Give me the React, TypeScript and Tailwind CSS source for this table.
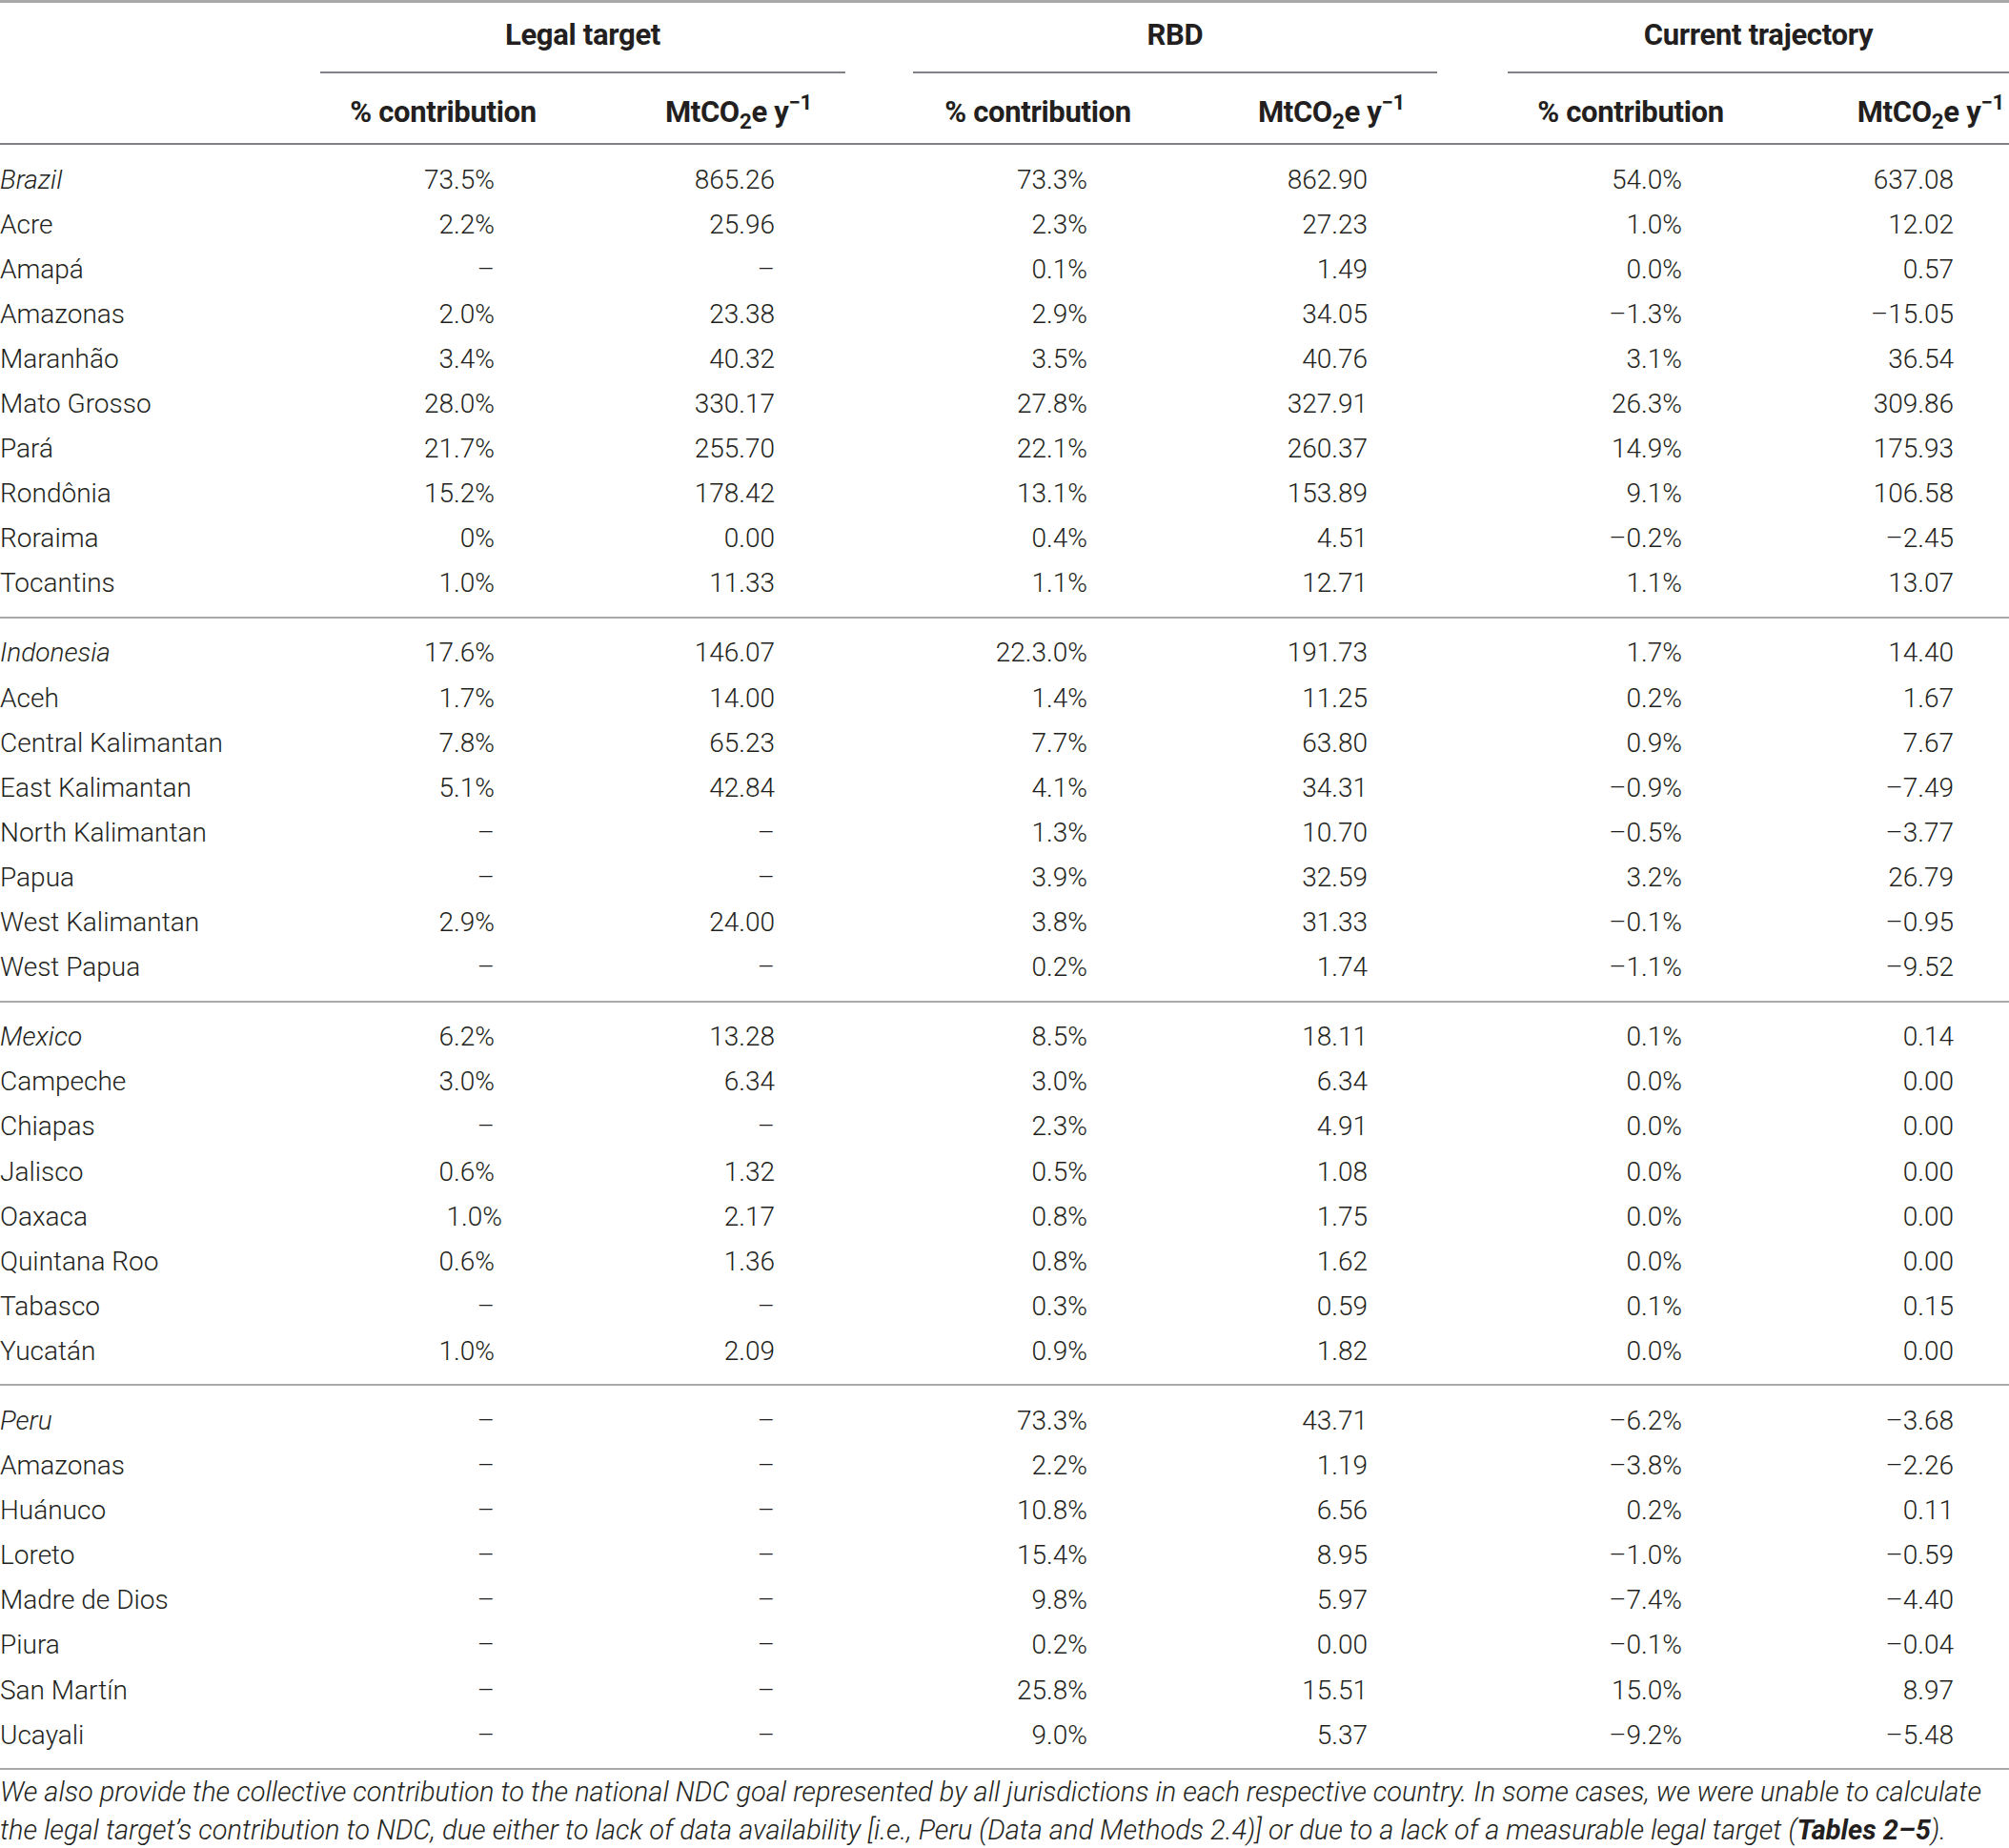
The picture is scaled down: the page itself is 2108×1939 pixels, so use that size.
import React from "react";

type Row = { name: string; italic?: boolean; v: string[]; shift?: number[] };

const groups: Row[][] = [
  [
    { name: "Brazil", italic: true, v: ["73.5%", "865.26", "73.3%", "862.90", "54.0%", "637.08"] },
    { name: "Acre", v: ["2.2%", "25.96", "2.3%", "27.23", "1.0%", "12.02"] },
    { name: "Amapá", v: ["–", "–", "0.1%", "1.49", "0.0%", "0.57"] },
    { name: "Amazonas", v: ["2.0%", "23.38", "2.9%", "34.05", "–1.3%", "–15.05"] },
    { name: "Maranhão", v: ["3.4%", "40.32", "3.5%", "40.76", "3.1%", "36.54"] },
    { name: "Mato Grosso", v: ["28.0%", "330.17", "27.8%", "327.91", "26.3%", "309.86"] },
    { name: "Pará", v: ["21.7%", "255.70", "22.1%", "260.37", "14.9%", "175.93"] },
    { name: "Rondônia", v: ["15.2%", "178.42", "13.1%", "153.89", "9.1%", "106.58"] },
    { name: "Roraima", v: ["0%", "0.00", "0.4%", "4.51", "–0.2%", "–2.45"] },
    { name: "Tocantins", v: ["1.0%", "11.33", "1.1%", "12.71", "1.1%", "13.07"] },
  ],
  [
    { name: "Indonesia", italic: true, v: ["17.6%", "146.07", "22.3.0%", "191.73", "1.7%", "14.40"] },
    { name: "Aceh", v: ["1.7%", "14.00", "1.4%", "11.25", "0.2%", "1.67"] },
    { name: "Central Kalimantan", v: ["7.8%", "65.23", "7.7%", "63.80", "0.9%", "7.67"] },
    { name: "East Kalimantan", v: ["5.1%", "42.84", "4.1%", "34.31", "–0.9%", "–7.49"] },
    { name: "North Kalimantan", v: ["–", "–", "1.3%", "10.70", "–0.5%", "–3.77"] },
    { name: "Papua", v: ["–", "–", "3.9%", "32.59", "3.2%", "26.79"] },
    { name: "West Kalimantan", v: ["2.9%", "24.00", "3.8%", "31.33", "–0.1%", "–0.95"] },
    { name: "West Papua", v: ["–", "–", "0.2%", "1.74", "–1.1%", "–9.52"] },
  ],
  [
    { name: "Mexico", italic: true, v: ["6.2%", "13.28", "8.5%", "18.11", "0.1%", "0.14"] },
    { name: "Campeche", v: ["3.0%", "6.34", "3.0%", "6.34", "0.0%", "0.00"] },
    { name: "Chiapas", v: ["–", "–", "2.3%", "4.91", "0.0%", "0.00"] },
    { name: "Jalisco", v: ["0.6%", "1.32", "0.5%", "1.08", "0.0%", "0.00"] },
    { name: "Oaxaca", v: ["1.0%", "2.17", "0.8%", "1.75", "0.0%", "0.00"], shift: [8, 0, 0, 0, 0, 0] },
    { name: "Quintana Roo", v: ["0.6%", "1.36", "0.8%", "1.62", "0.0%", "0.00"] },
    { name: "Tabasco", v: ["–", "–", "0.3%", "0.59", "0.1%", "0.15"] },
    { name: "Yucatán", v: ["1.0%", "2.09", "0.9%", "1.82", "0.0%", "0.00"] },
  ],
  [
    { name: "Peru", italic: true, v: ["–", "–", "73.3%", "43.71", "–6.2%", "–3.68"] },
    { name: "Amazonas", v: ["–", "–", "2.2%", "1.19", "–3.8%", "–2.26"] },
    { name: "Huánuco", v: ["–", "–", "10.8%", "6.56", "0.2%", "0.11"] },
    { name: "Loreto", v: ["–", "–", "15.4%", "8.95", "–1.0%", "–0.59"] },
    { name: "Madre de Dios", v: ["–", "–", "9.8%", "5.97", "–7.4%", "–4.40"] },
    { name: "Piura", v: ["–", "–", "0.2%", "0.00", "–0.1%", "–0.04"] },
    { name: "San Martín", v: ["–", "–", "25.8%", "15.51", "15.0%", "8.97"] },
    { name: "Ucayali", v: ["–", "–", "9.0%", "5.37", "–9.2%", "–5.48"] },
  ],
];

const Unit = () => (
  <span>
    MtCO<sub className="text-[0.72em] -bottom-[0.3em]">2</sub>e y<sup className="text-[0.72em] -top-[0.6em]">−1</sup>
  </span>
);

export default function App() {
  const font = { fontFamily: '"Roboto", "Liberation Sans", Arial, sans-serif' };
  return (
    <div className="w-[2108px] h-[1939px] bg-white text-[#231f20] overflow-hidden" style={font}>
      {/* top rule */}
      <div className="h-[3px] bg-[#a7a9ab]" />
      {/* group headers */}
      <div className="grid grid-cols-[336px_551px_71px_550px_74px_526px] h-[74px] text-[31px] font-bold tracking-[-0.01em]">
        <div />
        <div className="border-b-2 border-[#808285] flex justify-center pt-[16px] leading-[36px]">Legal target</div>
        <div />
        <div className="border-b-2 border-[#808285] flex justify-center pt-[16px] leading-[36px]">RBD</div>
        <div />
        <div className="border-b-2 border-[#808285] flex justify-center pt-[16px] leading-[36px]">Current trajectory</div>
      </div>
      {/* sub headers */}
      <div className="grid grid-cols-[336px_258px_362px_266px_350px_278px_258px] h-[75px] text-[31px] font-bold tracking-[-0.01em] leading-[36px] border-b-2 border-[#808285]">
        <div />
        <div className="text-center pt-[23px]">% contribution</div>
        <div className="text-center pt-[23px]"><Unit /></div>
        <div className="text-center pt-[23px]">% contribution</div>
        <div className="text-center pt-[23px]"><Unit /></div>
        <div className="text-center pt-[23px]">% contribution</div>
        <div className="text-right pr-[5px] pt-[23px] whitespace-nowrap"><Unit /></div>
      </div>
      {/* body */}
      {groups.map((g, gi) => (
        <div key={gi} className="pt-[13px] pb-[11px] border-b-2 border-[#a7a9ab]">
          {g.map((r, ri) => (
            <div
              key={ri}
              className="grid grid-cols-[336px_183px_294px_328px_294px_330px_285px_58px] h-[47.1px] items-center text-[28px] font-light leading-[34px]"
            >
              <div className={r.italic ? "italic" : ""}>{r.name}</div>
              {r.v.map((x, i) => (
                <div key={i} className="text-right whitespace-nowrap">
                  <span style={r.shift && r.shift[i] ? { position: "relative", left: r.shift[i] } : undefined}>{x}</span>
                </div>
              ))}
              <div />
            </div>
          ))}
        </div>
      ))}
      {/* footnote */}
      <div className="italic font-light text-[29px] leading-[40px] pt-[3px] text-[#231f20]">
        <div className="whitespace-nowrap">
          We also provide the collective contribution to the national NDC goal represented by all jurisdictions in each respective country. In some cases, we were unable to calculate
        </div>
        <div className="whitespace-nowrap">
          the legal target’s contribution to NDC, due either to lack of data availability [i.e., Peru (Data and Methods 2.4)] or due to a lack of a measurable legal target (<span className="font-bold">Tables 2–5</span>).
        </div>
      </div>
    </div>
  );
}
